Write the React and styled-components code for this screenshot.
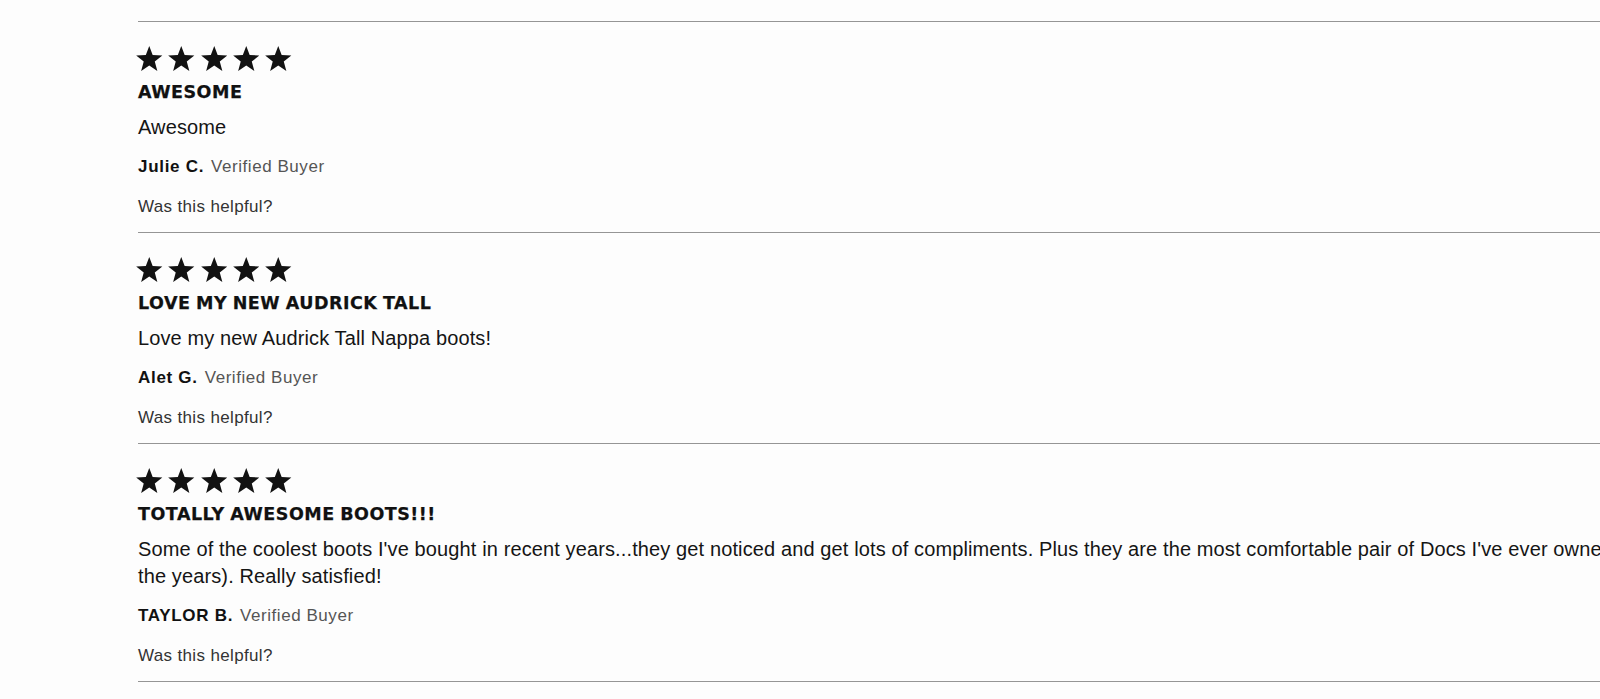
import React from 'react'
import styled, { createGlobalStyle } from 'styled-components'

const reviews = [
  {
    title: 'Awesome',
    body: 'Awesome',
    author: 'Julie C.',
  },
  {
    title: 'Love my new Audrick Tall',
    body: 'Love my new Audrick Tall Nappa boots!',
    author: 'Alet G.',
  },
  {
    title: 'Totally awesome boots!!!',
    body:
      "Some of the coolest boots I've bought in recent years...they get noticed and get lots of compliments. Plus they are the most comfortable pair of Docs I've ever owned (over the years). Really satisfied!",
    author: 'TAYLOR B.',
  },
]

function Star() {
  return (
    <StarIcon viewBox="0 0 26 25" aria-hidden="true">
      <polygon points="13,0 16.35,8.89 25.84,9.33 18.42,15.26 20.94,24.42 13,19.2 5.06,24.42 7.58,15.26 0.16,9.33 9.65,8.89" />
    </StarIcon>
  )
}

function Review({ review }) {
  return (
    <Item>
      <Stars>
        {[0, 1, 2, 3, 4].map(i => (
          <Star key={i} />
        ))}
      </Stars>
      <Title>{review.title}</Title>
      <Body>{review.body}</Body>
      <Author>
        <Name>{review.author}</Name>
        <Badge>Verified Buyer</Badge>
      </Author>
      <Helpful>Was this helpful?</Helpful>
    </Item>
  )
}

export default function App() {
  return (
    <>
      <GlobalStyle />
      <Page>
        <List>
          {reviews.map(r => (
            <Review key={r.author} review={r} />
          ))}
        </List>
      </Page>
    </>
  )
}

const GlobalStyle = createGlobalStyle`
  html, body {
    margin: 0;
    padding: 0;
    background: #fdfdfd;
    overflow-x: hidden;
  }
  body {
    font-family: "Liberation Sans", Arial, sans-serif;
    color: #111;
  }
`

const Page = styled.div`
  padding: 21px 0 0 138px;
`

const List = styled.div`
  width: 1555px;
  border-bottom: 1px solid #959595;
`

const Item = styled.div`
  border-top: 1px solid #959595;
  padding: 24px 0 15px;
`

const Stars = styled.div`
  display: flex;
  gap: 5.8px;
  margin-left: -2px;
  height: 24px;
`

const StarIcon = styled.svg`
  width: 26.5px;
  height: 25.5px;
  fill: #121212;
`

const Title = styled.h3`
  margin: 11px 0 0;
  font-family: "DejaVu Sans", sans-serif;
  font-weight: 700;
  font-size: 17.5px;
  line-height: 22px;
  letter-spacing: 0.5px;
  word-spacing: -1px;
  text-transform: uppercase;
  color: #111;
  -webkit-text-stroke: 0.25px #111;
`

const Body = styled.p`
  margin: 11px 0 0;
  font-size: 20px;
  line-height: 27px;
  letter-spacing: 0.12px;
  color: #151515;
`

const Author = styled.div`
  display: flex;
  align-items: baseline;
  gap: 7px;
  margin-top: 16px;
  font-size: 17px;
  line-height: 20px;
`

const Name = styled.span`
  font-weight: 700;
  letter-spacing: 0.7px;
  color: #111;
`

const Badge = styled.span`
  letter-spacing: 0.55px;
  color: #555;
`

const Helpful = styled.div`
  margin-top: 20px;
  font-size: 17px;
  line-height: 20px;
  letter-spacing: 0.35px;
  color: #333;
`
